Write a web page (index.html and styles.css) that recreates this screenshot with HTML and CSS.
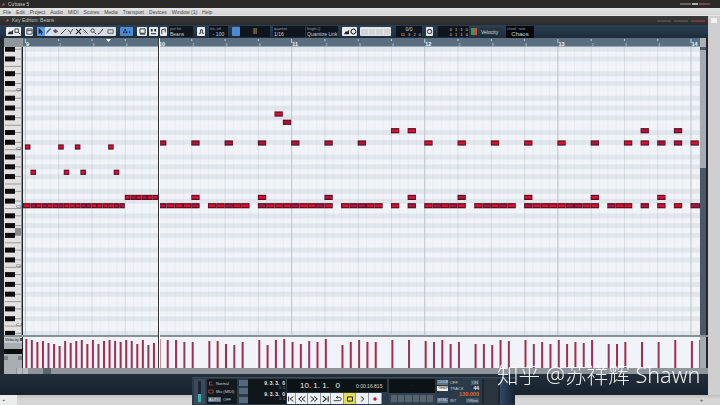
FILE: index.html
```html
<!DOCTYPE html>
<html lang="en">
<head>
  <meta charset="UTF-8">
  <title>Cubase 5</title>
  <link rel="stylesheet" href="styles.css">
</head>
<body>
  <div class="app">
    <div class="app-main">
      <div class="title-bar">
        <svg class="app-icon" viewBox="0 0 6 6"><path d="M1 5 L3 1 L5 3 L3 4 Z" fill="#c9546a"/></svg>
        <span>Cubase 5</span>
        <span class="win-btns"><i></i><i class="light"></i><i class="red"></i></span>
      </div>
      <div class="menu-bar">
        <span>File</span><span>Edit</span><span>Project</span><span>Audio</span><span>MIDI</span><span>Scores</span><span>Media</span><span>Transport</span><span>Devices</span><span>Window (1)</span><span>Help</span>
      </div>
      <div class="editor-title">
        <svg class="app-icon" viewBox="0 0 6 6"><path d="M1 5 L3 1 L5 3 L3 4 Z" fill="#c9546a"/></svg>
        <span>Key Edition: Beans</span>
        <span class="win-btns small"><i></i><i></i><i class="red"></i></span>
      </div>

      <div class="toolbar">
        <div class="btns w15">
          <svg viewBox="0 0 8 8"><path d="M1 7h6V2L5 4H3L1 6z" fill="#333"/></svg>
          <svg viewBox="0 0 8 8"><path d="M1 1h4v4H1zM5 5l2 2" fill="none" stroke="#333"/></svg>
        </div>
        <div class="btns w8 ml4">
          <svg viewBox="0 0 8 8"><path d="M1 1h6v6H1zM1 3h6" fill="none" stroke="#333"/></svg>
        </div>
        <div class="btns tools ml4">
          <span class="on"><svg viewBox="0 0 8 8"><path d="M2 0v7l2-2 1 3 1-1-1-2h2z" fill="#123"/></svg></span>
          <span class="on-soft"><svg viewBox="0 0 8 8"><path d="M1 7l1-3 4-4 1 1-4 4z" fill="#556"/></svg></span>
          <span><svg viewBox="0 0 8 8"><path d="M1 3l3 3 3-2-3-3z" fill="#556"/></svg></span>
          <span><svg viewBox="0 0 8 8"><path d="M1 7L7 1" stroke="#334" fill="none"/></svg></span>
          <span><svg viewBox="0 0 8 8"><path d="M1 2l3 3 3-4M4 5v2" stroke="#334" fill="none"/></svg></span>
          <span><svg viewBox="0 0 8 8"><path d="M1 1l6 6M7 1L1 7" stroke="#222" stroke-width="1.3" fill="none"/></svg></span>
          <span><svg viewBox="0 0 8 8"><path d="M1 1l6 6M2 4l2 2" stroke="#556" fill="none"/></svg></span>
          <span><svg viewBox="0 0 8 8"><circle cx="3" cy="3" r="2" fill="none" stroke="#334"/><path d="M5 5l2 2" stroke="#334"/></svg></span>
          <span><svg viewBox="0 0 8 8"><path d="M1 7l2-1 4-5" stroke="#334" fill="none"/></svg></span>
          <span class="wide"><svg viewBox="0 0 8 8"><path d="M1 2h6v4H1z" fill="none" stroke="#556"/></svg></span>
        </div>
        <div class="btns blue w13 ml4">
          <svg viewBox="0 0 10 8"><path d="M1 6h2V4H1zM4 6h2V4H4zM2.5 3h2V1h-2zM8 3l1.5 2L8 6" fill="#123"/></svg>
        </div>
        <div class="btns w10 ml4"><svg viewBox="0 0 8 8"><path d="M1 1h6v5H1zM1 7h6" fill="none" stroke="#222"/></svg></div>
        <div class="btns w9 ml2"><svg viewBox="0 0 8 8"><path d="M1 1h2v3H1zM5 1h2v3H5zM1 6h6v1H1z" fill="#222"/></svg></div>
        <div class="btns w7 ml2"><svg viewBox="0 0 8 8"><path d="M2 7V2l4-1v4" fill="none" stroke="#223"/></svg></div>
        <div class="field w24 ml2"><small>part list</small><b>Beans</b></div>
        <div class="btns w8 ml4"><svg viewBox="0 0 8 8"><path d="M1 6h2V2h2v4h2" fill="none" stroke="#223"/></svg></div>
        <div class="field w19 ml4"><small>ins. vel.</small><b class="center">- 100</b></div>
        <div class="btns blue w8 ml4"></div>
        <div class="field w30"><b class="center grid-glyph">⠿</b></div>
        <div class="field w32 ml3"><small>quantize</small><b>1/16</b></div>
        <div class="field w32 ml1"><small>length Q</small><b>Quantize Link</b></div>
        <div class="btns w15 ml4">
          <svg viewBox="0 0 8 8"><path d="M1 7h6V2L5 4H3z" fill="#222"/></svg>
          <svg viewBox="0 0 8 8"><circle cx="4" cy="4" r="2.8" fill="none" stroke="#222" stroke-width="1.2"/></svg>
        </div>
        <div class="btns dim w31 ml3"><i></i><i></i><i></i><i></i></div>
        <div class="field w26 ml5"><b class="center">0/0</b><b class="num">11 3 2 0</b></div>
        <div class="btns w7 ml4"><svg viewBox="0 0 8 8"><circle cx="4" cy="4" r="2.5" fill="none" stroke="#556" stroke-width="1.3"/></svg></div>
        <div class="field w31 ml5"><b class="num">0 1 1 0</b><b class="num">0 1 1 0</b></div>
        <span class="swatch"></span>
        <div class="field w22 ml3 one"><b>Velocity</b></div>
        <div class="field w28 ml4 dark"><small>chord : note</small><b class="center big">Chaos</b></div>
      </div>

      <div class="editor">
        <div class="ruler-row">
          <div class="ruler-corner"></div>
          <svg id="ruler" class="ruler" viewBox="23 38 677 9"></svg>
          <div class="scroll-btn"></div>
        </div>
        <div class="canvas-row">
          <svg id="keyboard" class="keyboard" viewBox="4 47 18 288"></svg>
          <svg id="grid" class="grid" viewBox="23 47 677 288"></svg>
          <div class="vscroll"><div class="vthumb"></div></div>
        </div>
        <div class="divider"></div>
        <div class="lane-row">
          <div class="lane-head">
            <div class="lane-name"><span>Velocity</span><i></i></div>
            <div class="lane-black"></div>
            <div class="lane-btns"><i></i><i></i></div>
          </div>
          <svg id="lane" class="lane" viewBox="23 337 677 31"></svg>
          <div class="vscroll plain"></div>
        </div>
        <div class="hscroll">
          <div class="hscroll-corner"></div>
          <i class="arrow"></i><i class="arrow"></i><div class="hthumb"></div>
        </div>
        <div class="playhead"></div>
      </div>

      <div class="navy"></div>
      <div class="status"><span class="status-left">▪</span><span class="status-mid"></span><span class="status-end">+</span></div>
    </div>
    <div class="side-strip"><i></i></div>
  </div>

  <div class="transport">
    <div class="tp-meter"><i></i></div>
    <div class="tp-mode">
      <div><svg viewBox="0 0 8 6"><path d="M1 5h6M2 5V1h3" stroke="#c8452c" fill="none"/></svg><span>Normal</span></div>
      <div><svg viewBox="0 0 8 6"><path d="M1 1h6v4H1z" stroke="#c8452c" fill="none"/></svg><span>Mix (MIDI)</span></div>
      <div class="tp-auto"><em>AUTO</em><span>OFF</span></div>
    </div>
    <div class="tp-side"><i></i><i></i><i></i></div>
    <div class="tp-locators">
      <b>9. 3. 3.  0</b>
      <small>0  0</small>
      <b>9. 3. 3.  0</b>
      <small>0  0</small>
    </div>
    <div class="tp-center">
      <div class="tp-display"><span class="pos">10. 1. 1.   0</span><span class="time">0:00:16.815</span></div>
      <div class="tp-buttons">
        <span class="b8"><svg viewBox="0 0 10 8"><path d="M2 1v6M8 1L4 4l4 3" stroke="#223" fill="none" stroke-width="1.2"/></svg></span>
        <span class="b12"><svg viewBox="0 0 12 8"><path d="M6 1L2 4l4 3M10 1L6 4l4 3" stroke="#223" fill="none" stroke-width="1.2"/></svg></span>
        <span class="b13"><svg viewBox="0 0 12 8"><path d="M2 1l4 3-4 3M6 1l4 3-4 3" stroke="#223" fill="none" stroke-width="1.2"/></svg></span>
        <span class="b9"><svg viewBox="0 0 10 8"><path d="M8 1v6M2 1l4 3-4 3" stroke="#223" fill="none" stroke-width="1.2"/></svg></span>
        <span class="b13"><svg viewBox="0 0 12 8"><path d="M2 6h7a2 2 0 0 0 0-4H6M7 1L5 2l2 1" stroke="#223" fill="none"/></svg></span>
        <span class="b12 stop"><svg viewBox="0 0 12 8"><path d="M3 1.5h6v5H3z" stroke="#223" fill="none" stroke-width="1.2"/></svg></span>
        <span class="b13"><svg viewBox="0 0 12 8"><path d="M5 1l3 3-3 3" stroke="#223" fill="none" stroke-width="1.2"/></svg></span>
        <span class="b13"><svg viewBox="0 0 12 8"><circle cx="6" cy="4" r="2" fill="#c8102e"/></svg></span>
      </div>
    </div>
    <div class="tp-marker">
      <div class="tp-black"><span>·</span></div>
      <div class="tp-dull"><i></i><i></i><i></i><i></i><i></i><i></i></div>
    </div>
    <div class="tp-right">
      <div class="tp-line"><em>CLICK</em><span>OFF</span><u>ON</u></div>
      <div class="tp-line"><em class="white">TEMPO</em><span>TRACK</span><strong>44</strong></div>
      <div class="tp-line"><em class="none"></em><span></span><strong class="tempo">130.000</strong></div>
      <div class="tp-line"><em>SYNC</em><span>INT</span><u>Offline</u></div>
    </div>
    <div class="tp-tail"><div class="tp-tail-box"></div><div class="tp-tail-fade"></div></div>
  </div>

  <div class="watermark">知乎 @苏祥辉 Shawn</div>

  <script src="script.js"></script>
</body>
</html>
```

FILE: styles.css
```css
* {
  box-sizing: border-box;
}

html, body {
  margin: 0;
  width: 720px;
  height: 405px;
  overflow: hidden;
  background: #1d2a36;
  font-family: "Liberation Sans", Arial, sans-serif;
}

svg {
  display: block;
}

.app {
  display: flex;
  width: 720px;
  height: 405px;
  filter: blur(.35px);
}

.app-main {
  display: flex;
  flex-direction: column;
  width: 708px;
}

.side-strip {
  width: 12px;
  margin-top: 16px;
  background: #cfcfcf;
  padding: 2px 3px;
}

.side-strip i {
  display: block;
  height: 5px;
  background: #f2f2f2;
}

.title-bar {
  position: relative;
  width: 720px;
  height: 8px;
  background: #2c2a28;
  color: #c9c9c9;
  font-size: 5px;
  line-height: 8px;
  display: flex;
  align-items: center;
  gap: 2px;
  padding-left: 1px;
  z-index: 1;
}

.app-icon {
  width: 5px;
  height: 5px;
}

.win-btns {
  margin-left: auto;
  margin-right: 10px;
  display: flex;
  gap: 1px;
}

.win-btns i {
  display: block;
  width: 11px;
  height: 2px;
  background: #6a6468;
}

.win-btns i.light {
  background: #b5b0b0;
  width: 6px;
}

.win-btns i.red {
  background: #7a4458;
}

.win-btns.small {
  margin-right: 3px;
  gap: 3px;
}

.win-btns.small i {
  width: 14px;
  background: #4c4c4c;
}

.win-btns.small i.red {
  background: #6d3a48;
}

.menu-bar {
  width: 720px;
  height: 8px;
  background: linear-gradient(#e4e4e4, #d2d2d2 80%, #f0f0f0);
  display: flex;
  align-items: center;
  gap: 5px;
  padding-left: 3px;
  color: #4a4a4a;
  font-size: 5px;
  line-height: 8px;
  position: relative;
  z-index: 1;
}

.editor-title {
  height: 9px;
  background: linear-gradient(#3a3a3a, #2b2b2b);
  color: #bcbcbc;
  font-size: 5px;
  line-height: 9px;
  display: flex;
  align-items: center;
  gap: 2px;
  padding-left: 5px;
}

.toolbar {
  height: 13px;
  background: linear-gradient(#2b3f53, #1e2c3b);
  display: flex;
  align-items: center;
  padding-left: 6px;
}

.btns {
  height: 9px;
  background: #e9edf0;
  display: flex;
  align-items: center;
  justify-content: center;
  flex-shrink: 0;
  border-radius: 1px;
}

.btns svg {
  width: 7px;
  height: 7px;
}

.btns.blue {
  background: #4c8bd0;
}

.btns.blue svg {
  width: 9px;
}

.btns.dim {
  background: #e2e5e8;
  gap: 1px;
  padding: 0 1px;
}

.btns.dim i {
  display: block;
  flex: 1;
  height: 6px;
  background: #cfd4d8;
}

.tools {
  width: 79px;
  background: #d7dde3;
  justify-content: flex-start;
}

.tools span {
  width: 7.5px;
  height: 9px;
  display: flex;
  align-items: center;
  justify-content: center;
}

.tools span.wide {
  width: 11px;
}

.tools span.on {
  background: #5b9be0;
}

.tools span.on-soft {
  background: #cfe0f0;
}

.w7 { width: 7px; }
.w8 { width: 8px; }
.w9 { width: 9px; }
.w10 { width: 10px; }
.w13 { width: 13px; }
.w15 { width: 15px; }
.w19 { width: 19px; }
.w22 { width: 22px; }
.w24 { width: 24px; }
.w26 { width: 26px; }
.w28 { width: 28px; }
.w30 { width: 30px; }
.w31 { width: 31px; }
.w32 { width: 32px; }
.ml1 { margin-left: 1px; }
.ml2 { margin-left: 2px; }
.ml3 { margin-left: 3px; }
.ml4 { margin-left: 4px; }
.ml5 { margin-left: 5px; }

.field {
  height: 11px;
  background: #0f151c;
  color: #cfd4d8;
  display: flex;
  flex-direction: column;
  justify-content: center;
  padding: 0 1px;
  flex-shrink: 0;
  overflow: hidden;
  white-space: nowrap;
}

.field small {
  font-size: 3.5px;
  line-height: 4px;
  color: #9aa3ab;
}

.field b {
  font-size: 5px;
  line-height: 6px;
  font-weight: normal;
}

.field b.center {
  text-align: center;
}

.field b.big {
  font-size: 6px;
}

.field b.num {
  font-size: 4px;
  line-height: 5px;
  text-align: right;
  word-spacing: 2px;
}

.field b.grid-glyph {
  font-family: "DejaVu Sans", sans-serif;
  font-size: 7px;
  color: #e5e5e5;
}

.field.one {
  height: 7px;
  background: #26343f;
}

.field.dark {
  background: #05080b;
  height: 12px;
}

.swatch {
  width: 6px;
  height: 7px;
  margin-left: 2px;
  flex-shrink: 0;
  background: linear-gradient(90deg, #2f9a5a 50%, #a8603a 50%);
}

.editor {
  position: relative;
  display: flex;
  flex-direction: column;
  background: #20262c;
}

.ruler-row {
  height: 9px;
  display: flex;
}

.ruler-corner {
  width: 19px;
  margin-left: 4px;
  background: #8f979d;
}

.ruler {
  width: 677px;
  height: 9px;
}

.scroll-btn {
  width: 6px;
  background: #a9afb4;
}

.canvas-row {
  height: 288px;
  display: flex;
  padding-left: 4px;
}

.keyboard {
  width: 18px;
  height: 288px;
  margin-right: 1px;
}

.grid {
  width: 677px;
  height: 288px;
}

.vscroll {
  width: 6px;
  background: #4d5862;
}

.vscroll.plain {
  background: #a5abb0;
}

.vthumb {
  height: 118px;
  margin-top: 3px;
  background: #a5abb0;
}

.divider {
  height: 2px;
  margin-left: 4px;
  background: #8a9097;
}

.lane-row {
  height: 31px;
  display: flex;
  padding-left: 4px;
}

.lane-head {
  width: 18px;
  margin-right: 1px;
  background: #a9aeb3;
  display: flex;
  flex-direction: column;
}

.lane-name {
  height: 6px;
  background: #c4c8cc;
  color: #222;
  font-size: 4px;
  line-height: 6px;
  display: flex;
  justify-content: space-between;
  padding-left: 1px;
}

.lane-name i {
  width: 3px;
  height: 3px;
  margin: 1px;
  background: #f0f0f0;
  border: 1px solid #555;
}

.lane-black {
  height: 5px;
  margin-top: 6px;
  background: #0c0c0c;
}

.lane-btns {
  display: flex;
  justify-content: space-between;
  margin-top: 2px;
}

.lane-btns i {
  width: 4px;
  height: 4px;
  background: #7c8186;
}

.lane {
  width: 677px;
  height: 31px;
}

.hscroll {
  height: 6px;
  margin-left: 4px;
  background: #8f959b;
  display: flex;
  gap: 1px;
}

.hscroll-corner {
  width: 12px;
  background: #a9aeb3;
}

.hscroll .arrow {
  width: 5px;
  background: #b5babe;
}

.hthumb {
  width: 8px;
  margin-left: 14px;
  background: #5c646c;
}

.playhead {
  position: absolute;
  left: 158px;
  top: 0;
  width: 1px;
  height: 330px;
  background: #333;
  box-shadow: 1px 0 0 #fff;
}

.navy {
  height: 21px;
  background: linear-gradient(#222f3b, #16222d);
}

.status {
  height: 10px;
  background: linear-gradient(#bdbdbd, #d6d6d6 40%);
  display: flex;
  font-size: 5px;
  line-height: 10px;
  color: #333;
  position: relative;
  width: 720px;
  z-index: 1;
}

.status-left {
  width: 17px;
  background: #ececec;
  padding-left: 3px;
}

.status-mid {
  flex: 1;
}

.status-end {
  width: 20px;
}

.transport {
  position: absolute;
  left: 192px;
  top: 377px;
  width: 323px;
  height: 28px;
  background: #2a3a49;
  display: flex;
  z-index: 2;
  color: #c9ced2;
  font-size: 4px;
  padding: 1px 0 1px 2px;
  border-top: 1px solid #3c4e5e;
}

.tp-meter {
  width: 11px;
  margin-right: 2px;
  background: #3b4b59;
  padding: 2px 4px;
}

.tp-meter i {
  display: block;
  height: 100%;
  background: linear-gradient(#1c2731 60%, #3ab0b0 60%);
}

.tp-mode {
  width: 30px;
  background: #14191f;
  display: flex;
  flex-direction: column;
  justify-content: space-around;
  padding: 0 1px;
}

.tp-mode div {
  display: flex;
  align-items: center;
  gap: 2px;
  white-space: nowrap;
}

.tp-mode svg {
  width: 6px;
  height: 5px;
}

.tp-auto em, .tp-line em {
  font-style: normal;
  background: #5c7286;
  color: #dfe5ea;
  padding: 0 1px;
}

.tp-side {
  width: 9px;
  margin-left: 2px;
  display: flex;
  flex-direction: column;
  justify-content: space-around;
}

.tp-side i {
  display: block;
  height: 6px;
  background: #55697c;
}

.tp-locators {
  width: 38px;
  background: #11161b;
  text-align: right;
  padding: 1px;
  display: flex;
  flex-direction: column;
  white-space: pre;
}

.tp-locators b {
  font-size: 5px;
  line-height: 6px;
  color: #e0e4e7;
}

.tp-locators small {
  font-size: 3.5px;
  line-height: 5px;
  color: #8d959c;
}

.tp-center {
  width: 100px;
  margin-left: 1px;
  display: flex;
  flex-direction: column;
}

.tp-display {
  height: 14px;
  background: #0d1217;
  display: flex;
  align-items: center;
  white-space: pre;
  padding-left: 13px;
}

.tp-display .pos {
  font-size: 8px;
  color: #eee;
  width: 56px;
}

.tp-display .time {
  font-size: 5px;
  color: #d8d8d8;
}

.tp-buttons {
  height: 11px;
  display: flex;
  margin-top: 1px;
}

.tp-buttons span {
  background: #eef1f3;
  border-right: 1px solid #8c98a2;
  display: flex;
  align-items: center;
  justify-content: center;
}

.b8 { width: 9px; }
.b9 { width: 10px; }
.b12 { width: 12px; }
.b13 { width: 13px; }

.tp-buttons span.stop {
  background: #e6dc50;
}

.tp-buttons svg {
  width: 10px;
  height: 8px;
}

.tp-marker {
  width: 46px;
  margin-left: 2px;
  display: flex;
  flex-direction: column;
}

.tp-black {
  height: 14px;
  background: #0d1217;
  text-align: center;
  line-height: 14px;
}

.tp-dull {
  flex: 1;
  display: flex;
  gap: 1px;
  padding: 2px;
  background: #33424f;
}

.tp-dull i {
  flex: 1;
  background: #56636f;
}

.tp-right {
  width: 42px;
  margin-left: 2px;
  display: flex;
  flex-direction: column;
  justify-content: space-around;
  line-height: 5px;
}

.tp-line {
  display: flex;
  align-items: center;
  gap: 2px;
  height: 6px;
  white-space: nowrap;
}

.tp-line em {
  width: 11px;
  font-size: 3.5px;
}

.tp-line em.white {
  background: #f0f0f0;
  color: #222;
}

.tp-line em.none {
  background: none;
}

.tp-line span {
  flex: 1;
}

.tp-line u {
  text-decoration: none;
  background: #425566;
  padding: 0 1px;
}

.tp-line strong {
  color: #f2f2f2;
  font-weight: bold;
  font-size: 5px;
}

.tp-line strong.tempo {
  color: #e26a2c;
  font-size: 5.5px;
}

.tp-tail {
  flex: 1;
  display: flex;
  margin-left: 3px;
  background: #1b2834;
}

.tp-tail-box {
  width: 14px;
  margin: 0 2px;
  background: #2b3540;
}

.tp-tail-fade {
  flex: 1;
  background: linear-gradient(90deg, #2f4a66, #16222d);
}

.watermark {
  position: absolute;
  left: 497px;
  top: 361px;
  z-index: 3;
  color: #fff;
  font-family: "Noto Sans", "Noto Sans CJK SC", sans-serif;
  font-size: 21.6px;
  font-weight: 300;
  line-height: 28px;
  white-space: nowrap;
  opacity: .92;
}
```

FILE: script.js
```js
// timeline: one 16th = 8.32px, bar 10 sits at x=158
const X0 = 24.9;
const STEP = 8.32;
const TRIP = 5.55;
const SEMI = 4.9;
const C1_Y = 206;
const NS = 'http://www.w3.org/2000/svg';

function add(svg, tag, attrs, text) {
  const el = document.createElementNS(NS, tag);
  for (const k in attrs) el.setAttribute(k, attrs[k]);
  if (text) el.textContent = text;
  svg.appendChild(el);
  return el;
}

const sx = (s) => X0 + s * STEP;
const tx = (t) => X0 + t * TRIP;

// pitch rows, semitones above C1
const isBlack = (n) => [1, 3, 6, 8, 10].includes(((n % 12) + 12) % 12);
const pitchY = (n) => C1_Y - n * SEMI;

function drawGrid() {
  const g = document.getElementById('grid');
  add(g, 'rect', { x: 23, y: 47, width: 677, height: 288, fill: '#f0f4f8' });
  for (let n = -27; n < 34; n++) {
    if (isBlack(n)) {
      add(g, 'rect', { x: 23, y: pitchY(n) - 2.4, width: 677, height: 4.9, fill: '#e0e6eb' });
    }
  }
  for (let s = 0; s <= 82; s++) {
    let color = 'rgba(180, 190, 200, .12)';
    if (s % 4 === 0) color = 'rgba(170, 180, 190, .35)';
    if (s % 16 === 0) color = '#bcc3c9';
    add(g, 'rect', { x: sx(s), y: 47, width: 1, height: 288, fill: color });
  }

  // [y, start, count]
  const trips = [
    [147, 0, 1], [147, 6, 1], [147, 9, 1], [147, 15, 1],
    [172.3, 1, 1], [172.3, 7, 1], [172.3, 10, 1], [172.3, 16, 1],
    [197.4, 18, 6],
    [205.7, 0, 18],
  ];
  trips.forEach(([y, t, c]) => {
    for (let i = 0; i < c; i++) note(g, tx(t + i) - (t === 0 && y > 200 && i === 0 ? 2 : 0), y, TRIP + (t === 0 && y > 200 && i === 0 ? 2 : 0), i);
  });

  const sixteenths = {
    114: [30], 122.3: [31],
    130.7: [44, 46, 74, 78],
    143: [16, 20, 24, 28, 32, 36, 40, 48, 52, 56, 60, 64, 68, 72, 74, 76, 78, 80],
    197.4: [20, 28, 36, 46, 52, 60, 68, 76],
    205.7: [16, 17, 18, 19, 20, 22, 23, 24, 25, 26, 28, 29, 30, 31, 32, 33, 34, 35, 36,
      38, 39, 40, 41, 42, 44, 46, 48, 49, 50, 51, 52, 54, 55, 56, 57, 58,
      60, 61, 62, 63, 64, 65, 66, 67, 68, 70, 71, 72, 74, 76, 78, 80, 81],
  };
  for (const y in sixteenths) {
    sixteenths[y].forEach((s, i) => note(g, sx(s), Number(y), s === 81 ? 5 : STEP, s + i));
  }
}

function note(g, x, y, w, i) {
  const dim = i % 5 === 1 || i % 7 === 3;
  add(g, 'rect', { x, y: y - 2.6, width: w, height: 5.2, fill: '#5e0c24' });
  add(g, 'rect', { x: x + 0.8, y: y - 1.4, width: w - 1.6, height: 2.8, fill: dim ? '#a8163c' : '#d8102e' });
}

function drawKeyboard() {
  const k = document.getElementById('keyboard');
  add(k, 'rect', { x: 4, y: 47, width: 18, height: 288, fill: '#e2e2e0' });
  add(k, 'rect', { x: 21, y: 47, width: 1, height: 288, fill: '#8e9499' });
  for (let n = -27; n < 34; n++) {
    const y = pitchY(n);
    const pc = ((n % 12) + 12) % 12;
    if (isBlack(n)) {
      add(k, 'rect', { x: 5, y: y - 2.5, width: 10, height: 5, fill: '#0c0c0c' });
      add(k, 'rect', { x: 15, y: y - 0.5, width: 6, height: 1, fill: '#9a9a9a' });
    } else if (pc === 0 || pc === 5) {
      add(k, 'rect', { x: 5, y: y + 2, width: 16, height: 1, fill: '#9a9a9a' });
    }
    if (pc === 0) {
      add(k, 'text', { x: 16, y: y + 2.4, 'font-size': 4, fill: '#333', 'font-family': 'Liberation Sans' }, 'C' + (n / 12 + 1));
    }
  }
  add(k, 'rect', { x: 15, y: 228, width: 6, height: 7, fill: '#8a8a8a' });
}

function drawRuler() {
  const r = document.getElementById('ruler');
  add(r, 'rect', { x: 23, y: 38, width: 677, height: 9, fill: '#5a6e7f' });
  add(r, 'rect', { x: 23, y: 46, width: 677, height: 1, fill: '#94a5b3' });
  for (let s = 0; s <= 81; s++) {
    if (s % 4 !== 0) continue;
    const bar = s % 16 === 0;
    add(r, 'rect', { x: sx(s), y: 39, width: 1, height: bar ? 4 : 2, fill: '#c4ced6' });
    if (bar) {
      add(r, 'text', { x: sx(s) + 1, y: 46.4, 'font-size': 5.5, 'font-weight': 'bold', fill: '#f4f6f8', 'font-family': 'Liberation Sans' }, String(9 + s / 16));
    } else {
      add(r, 'text', { x: sx(s) + 1, y: 46.2, 'font-size': 3.5, fill: '#d5dce2', 'font-family': 'Liberation Sans' }, String((s % 16) / 4 + 1));
    }
  }
  add(r, 'path', { d: 'M106 39h5l-2.5 3z', fill: '#fff' });
}

function drawLane() {
  const l = document.getElementById('lane');
  add(l, 'rect', { x: 23, y: 337, width: 677, height: 31, fill: '#f0f3f7' });
  const tripTops = [339, 340, 342, 341, 343, 344, 346, 341, 343, 341, 340, 344, 340, 344, 341, 340, 341, 342, 340, 341, 344, 340, 345, 343, 339];
  tripTops.forEach((top, i) => bar(l, tx(i) + 0.4, top, i));
  const tops = {
    17: 340, 18: 340, 19: 342, 20: 342,
    22: 341, 23: 341, 24: 344, 25: 345, 26: 342,
    28: 340, 29: 345, 30: 340, 31: 339, 32: 342, 33: 344, 34: 341, 35: 342, 36: 339,
    38: 345, 39: 342, 40: 340, 41: 342, 42: 342, 44: 340, 46: 340,
    48: 341, 49: 342, 50: 340, 51: 344, 52: 342,
    54: 344, 55: 344, 56: 345, 57: 340, 58: 341,
    60: 340, 61: 344, 62: 342, 63: 344, 64: 340, 65: 344, 66: 342, 67: 343, 68: 340,
    70: 344, 71: 344, 72: 342, 74: 342, 76: 342, 78: 340, 80: 341, 81: 340,
  };
  for (const s in tops) bar(l, sx(Number(s)) + 0.4, tops[s], Number(s));
}

function bar(l, x, top, i) {
  add(l, 'rect', { x, y: top, width: 2, height: 368 - top, fill: i % 3 === 1 ? '#8f3a5c' : '#a52c4e' });
}

drawGrid();
drawKeyboard();
drawRuler();
drawLane();
```
